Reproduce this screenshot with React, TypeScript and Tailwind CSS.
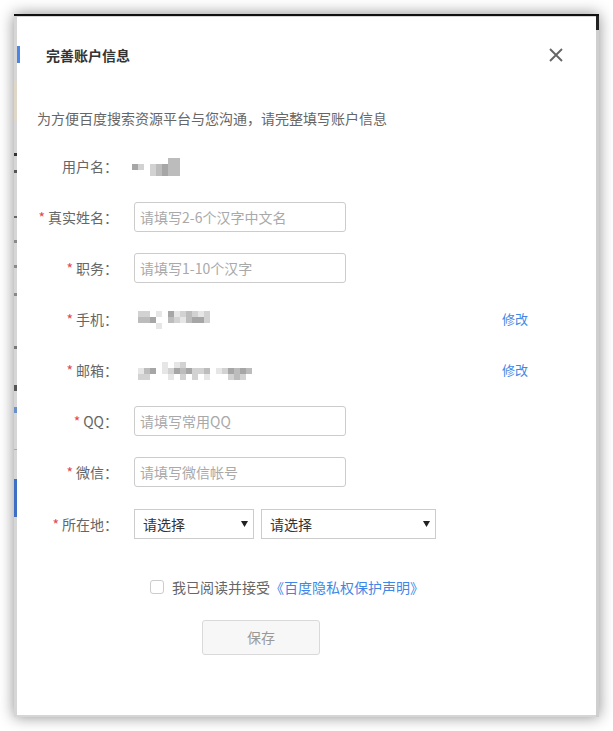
import React from "react";

const font = { fontFamily: '"Noto Sans CJK SC", "Noto Sans", sans-serif' };

const shades: Record<string, string> = {
  a: "#e6e6e6",
  b: "#d2d2d2",
  c: "#bcbcbc",
  d: "#a6a6a6",
  e: "#929292",
};

// pixelated (mosaic) values, drawn as blocks
function Mosaic({ rows, cell = 6 }: { rows: string[]; cell?: number }) {
  const w = rows[0].length * cell;
  const h = rows.length * cell;
  return (
    <svg width={w} height={h} viewBox={`0 0 ${w} ${h}`}>
      {rows.map((r, y) =>
        r.split("").map((ch, x) =>
          shades[ch] ? (
            <rect key={`${x}-${y}`} x={x * cell} y={y * cell} width={cell} height={cell} fill={shades[ch]} />
          ) : null
        )
      )}
    </svg>
  );
}

function Row({
  label,
  required = true,
  children,
  extra,
}: {
  label: string;
  required?: boolean;
  children?: React.ReactNode;
  extra?: React.ReactNode;
}) {
  return (
    <div className="flex h-[30px] items-center pr-[68px]">
      <div className="w-[101px] shrink-0 whitespace-nowrap text-right text-[14px] leading-[20px] text-[#666]">
        {required && <span className="mr-[3px] text-[#e5474b]">*</span>}
        {label}：
      </div>
      <div className="ml-[16px] flex flex-1 items-center">{children}</div>
      {extra}
    </div>
  );
}

function Input({ placeholder }: { placeholder: string }) {
  return (
    <input
      placeholder={placeholder}
      className="h-[30px] w-[212px] rounded-[3px] border border-[#cccccc] bg-white pl-[5px] text-[14px] text-[#333] outline-none placeholder:text-[#a9a9a9]"
      style={font}
    />
  );
}

function Select({ width }: { width: string }) {
  return (
    <div className={`flex h-[30px] items-center justify-between border border-[#cccccc] bg-white pl-[8px] pr-[5px] text-[14px] text-[#333] ${width}`}>
      <span>请选择</span>
      <svg width="7" height="8" viewBox="0 0 7 8">
        <path d="M0 1 L7 1 L3.5 7 Z" fill="#222" />
      </svg>
    </div>
  );
}

function LeftStrip() {
  return (
    <div className="flex w-[3px] shrink-0 flex-col bg-[#d6d6d6]">
      <div className="h-[65px]" />
      <div className="h-[40px] bg-[#e0d6c8]" />
      <div className="h-[32px]" />
      <div className="h-[3px] bg-[#333]" />
      <div className="h-[14px]" />
      <div className="h-[3px] bg-[#555]" />
      <div className="h-[43px]" />
      <div className="h-[2px] bg-[#666]" />
      <div className="h-[22px]" />
      <div className="h-[3px] bg-[#8a8a8a]" />
      <div className="h-[22px]" />
      <div className="h-[3px] bg-[#8a8a8a]" />
      <div className="h-[25px]" />
      <div className="h-[3px] bg-[#888]" />
      <div className="h-[50px]" />
      <div className="h-[3px] bg-[#777]" />
      <div className="h-[36px]" />
      <div className="h-[6px] bg-[#555]" />
      <div className="h-[16px]" />
      <div className="h-[6px] bg-[#6b8fc9]" />
      <div className="h-[36px]" />
      <div className="h-[1px] bg-[#aaa]" />
      <div className="h-[29px]" />
      <div className="h-[38px] bg-[#3f6fc2]" />
    </div>
  );
}

export default function App() {
  return (
    <div className="h-[731px] w-[613px] overflow-hidden bg-white pl-[14px] pt-[14px]" style={font}>
      <div className="flex h-[703px] w-[585px] border-t-2 border-[#111] bg-[#d6d6d6] shadow-[0_0_14px_rgba(0,0,0,0.45)]">
        <LeftStrip />
        <div className="relative mb-[2px] mt-[1px] flex w-[579px] flex-col bg-white">
          <div className="absolute left-0 top-[29px] h-[17px] w-[3px] bg-[#4a86e8]" />

          <div className="flex items-center justify-between pl-[29px] pr-[33px] pt-[28px]">
            <h2 className="text-[14px] font-bold leading-[20px] text-[#333]">完善账户信息</h2>
            <svg width="14" height="14" viewBox="0 0 14 14">
              <path d="M1 1 L13 13 M13 1 L1 13" stroke="#666" strokeWidth="1.9" />
            </svg>
          </div>

          <p className="mt-[43px] pl-[20px] text-[14px] leading-[20px] text-[#666]">
            为方便百度搜索资源平台与您沟通，请完整填写账户信息
          </p>

          <div className="mt-[23px] flex flex-col gap-[21px]">
            <Row label="用户名" required={false}>
              <div className="-ml-[2px] mt-[2px]">
                <Mosaic cell={6} rows={["......cc", "db.bcdcc", "...bcdcc"]} />
              </div>
            </Row>
            <Row label="真实姓名">
              <Input placeholder="请填写2-6个汉字中文名" />
            </Row>
            <Row label="职务">
              <Input placeholder="请填写1-10个汉字" />
            </Row>
            <Row label="手机" extra={<a className="text-[13px] text-[#3f87e6]">修改</a>}>
              <div className="ml-[4px] mt-[2px]">
                <Mosaic cell={6} rows={["bb.a.dabcbab.", "ccd..cbacddb.", "...a........."]} />
              </div>
            </Row>
            <Row label="邮箱" extra={<a className="text-[13px] text-[#3f87e6]">修改</a>}>
              <div className="ml-[4px] mt-[2px]">
                <Mosaic
                  cell={6}
                  rows={["....a.ab............", "acd.abdcdbbc.abdcdc.", "bb...a.b.b.a...bcb.."]}
                />
              </div>
            </Row>
            <Row label="QQ">
              <Input placeholder="请填写常用QQ" />
            </Row>
            <Row label="微信">
              <Input placeholder="请填写微信帐号" />
            </Row>
            <div className="mt-[1px]">
              <Row label="所在地">
                <div className="flex gap-[7px]">
                  <Select width="w-[120px]" />
                  <Select width="w-[175px]" />
                </div>
              </Row>
            </div>
          </div>

          <div className="mt-[38px] flex h-[20px] items-center pl-[133px]">
            <span className="h-[14px] w-[14px] rounded-[3px] border border-[#cccccc] bg-white" />
            <span className="ml-[8px] text-[14px] leading-[20px] text-[#666]">我已阅读并接受</span>
            <a className="text-[14px] leading-[20px] text-[#3f87e6]">《百度隐私权保护声明》</a>
          </div>

          <div className="mt-[23px] pl-[185px]">
            <button
              className="h-[35px] w-[118px] rounded-[3px] border border-[#d9d9d9] bg-[#f7f7f7] text-[14px] text-[#999]"
              style={font}
            >
              保存
            </button>
          </div>
        </div>
        <div className="flex w-[3px] shrink-0 flex-col bg-[#cfcfcf]">
          <div className="h-[14px] bg-[#222]" />
        </div>
      </div>
    </div>
  );
}
